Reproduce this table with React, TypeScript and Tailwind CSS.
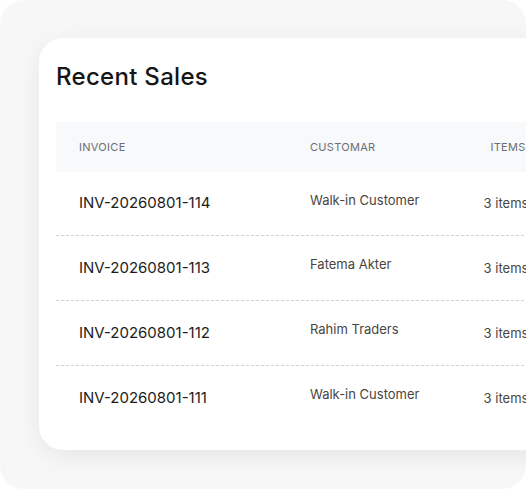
import React from "react";

const rows = [
  { inv: "INV-20260801-114", cust: "Walk-in Customer" },
  { inv: "INV-20260801-113", cust: "Fatema Akter" },
  { inv: "INV-20260801-112", cust: "Rahim Traders" },
  { inv: "INV-20260801-111", cust: "Walk-in Customer" },
];

export default function App() {
  return (
    <div className="w-[526px] h-[489px] bg-white overflow-hidden" style={{ fontFamily: "Inter, 'Noto Sans', sans-serif" }}>
      <div className="w-[526px] h-[489px] rounded-[24px] bg-[#f7f7f8] pt-[38px] pl-[39px] overflow-hidden">
        <div className="w-[600px] h-[412px] bg-white rounded-[24px] shadow-[0_6px_24px_rgba(0,0,0,0.07)] pt-[23px] pl-[17px]">
          <h2 className="text-[24px] leading-[32px] font-medium text-[#161616] tracking-[0.3px]">Recent Sales</h2>
          <div className="mt-[29px]">
            <div className="h-[50px] bg-[#f8f9fb] flex items-center pl-[23px] text-[11px] text-[#6b6f76] tracking-[0.3px] uppercase">
              <div className="w-[231px]">Invoice</div>
              <div className="w-[156px]">Customar</div>
              <div className="w-[84px] text-center">Items</div>
            </div>
            {rows.map((r, i) => (
              <div
                key={r.inv}
                className={
                  i === 0
                    ? "h-[64px] flex items-center pl-[23px] border-b border-dashed border-[#cfd2d6]"
                    : i < rows.length - 1
                    ? "h-[65px] flex items-center pl-[23px] border-b border-dashed border-[#cfd2d6]"
                    : "h-[64px] flex items-center pl-[23px]"
                }
              >
                <div className="w-[231px] text-[15px] text-[#1c1c1c]">{r.inv}</div>
                <div className="w-[156px] text-[13px] text-[#4a4540] pb-[6px]">{r.cust}</div>
                <div className="w-[80px] text-center text-[13px] text-[#4a4540] pt-[1px]">3 items</div>
              </div>
            ))}
          </div>
        </div>
      </div>
    </div>
  );
}
